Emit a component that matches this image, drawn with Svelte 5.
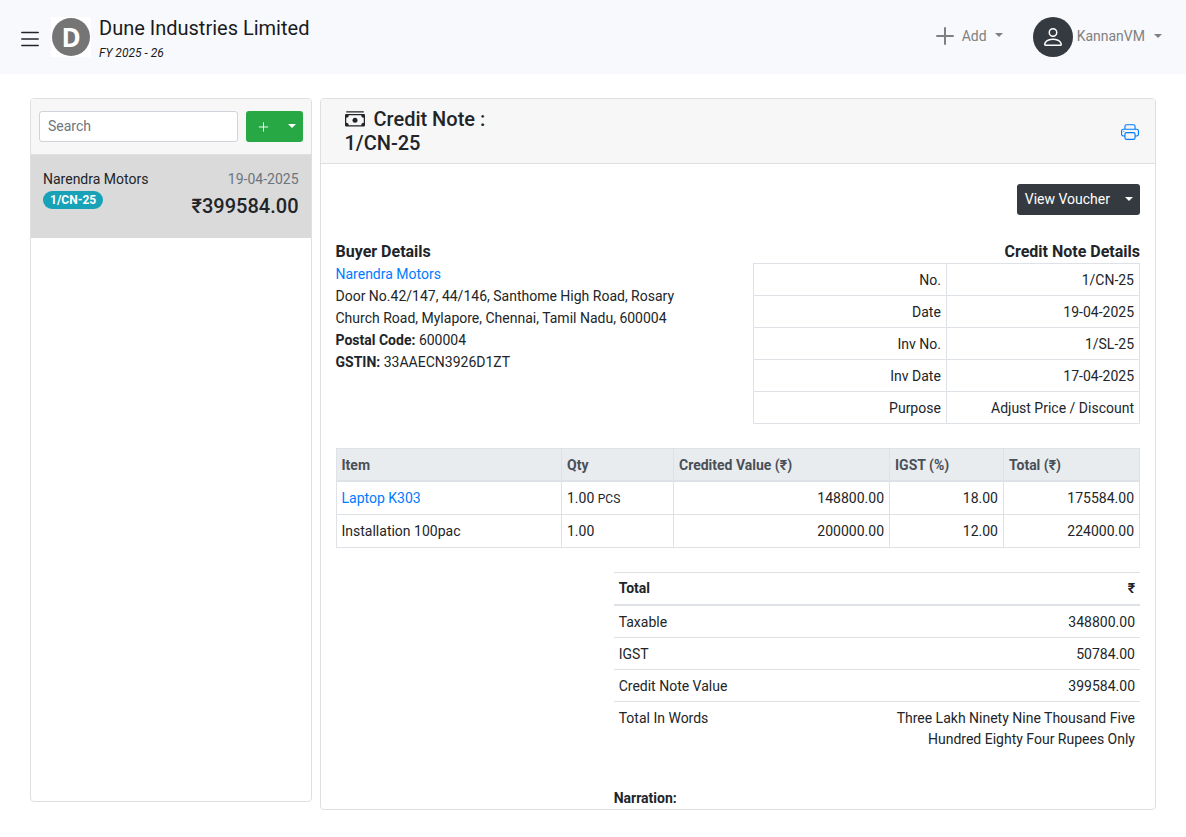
<script>
  const details = [
    ['No.', '1/CN-25'],
    ['Date', '19-04-2025'],
    ['Inv No.', '1/SL-25'],
    ['Inv Date', '17-04-2025'],
    ['Purpose', 'Adjust Price / Discount']
  ];
  const items = [
    { name: 'Laptop K303', link: true, qty: '1.00', unit: 'PCS', value: '148800.00', tax: '18.00', total: '175584.00' },
    { name: 'Installation 100pac', link: false, qty: '1.00', unit: '', value: '200000.00', tax: '12.00', total: '224000.00' }
  ];
  const totals = [
    ['Taxable', '348800.00'],
    ['IGST', '50784.00'],
    ['Credit Note Value', '399584.00'],
    ['Total In Words', 'Three Lakh Ninety Nine Thousand Five Hundred Eighty Four Rupees Only']
  ];
  let search = $state('');
</script>

<header class="topbar">
  <button class="plain menu" aria-label="Menu">
    <svg width="26" height="26" viewBox="0 0 16 16" fill="none" stroke="#212529" stroke-linecap="round"><path d="M3 4h10M3 8h10M3 12h10" /></svg>
  </button>
  <a class="brand" href="#home">
    <span class="logo"><span>D</span></span>
    <span class="company">
      <span class="name">Dune Industries Limited</span>
      <span class="year">FY 2025 - 26</span>
    </span>
  </a>
  <nav>
    <button class="plain add">
      <svg width="20" height="20" viewBox="0 0 20 20" fill="none" stroke="currentColor" stroke-width="2" stroke-linecap="round"><path d="M10 2v16M2 10h16" /></svg>
      <span>Add</span><i class="caret"></i>
    </button>
    <button class="plain user">
      <span class="avatar">
        <svg width="24" height="24" viewBox="0 0 16 16" fill="currentColor"><path d="M8 8a3 3 0 1 0 0-6 3 3 0 0 0 0 6m2-3a2 2 0 1 1-4 0 2 2 0 0 1 4 0m4 8c0 1-1 1-1 1H3s-1 0-1-1 1-4 6-4 6 3 6 4m-1-.004c-.001-.246-.154-.986-.832-1.664C11.516 10.68 10.289 10 8 10s-3.516.68-4.168 1.332c-.678.678-.83 1.418-.832 1.664z" /></svg>
      </span>
      <span class="label">KannanVM</span><i class="caret"></i>
    </button>
  </nav>
</header>

<main>
  <aside class="card list">
    <div class="card-head tools">
      <input type="text" placeholder="Search" aria-label="Search" bind:value={search} />
      <div class="group green">
        <button aria-label="New credit note">
          <svg width="15" height="15" viewBox="0 0 16 16" fill="none" stroke="currentColor" stroke-linecap="round"><path d="M8 4v9M3.5 8.5h9" /></svg>
        </button>
        <button aria-label="More options"><i class="caret"></i></button>
      </div>
    </div>
    <a class="entry" href="#note">
      <span class="who"><span>Narendra Motors</span><span class="badge">1/CN-25</span></span>
      <span class="sum"><span class="muted">19-04-2025</span><span class="amount">₹399584.00</span></span>
    </a>
  </aside>

  <section class="card note">
    <div class="card-head title">
      <h1>
        <svg width="20" height="20" viewBox="0 0 16 16" fill="currentColor"><path d="M1 1.7h14v1H1zM0 5a1 1 0 0 1 1-1h14a1 1 0 0 1 1 1v8a1 1 0 0 1-1 1H1a1 1 0 0 1-1-1zm3 0a2 2 0 0 1-2 2v4a2 2 0 0 1 2 2h10a2 2 0 0 1 2-2V7a2 2 0 0 1-2-2z" /><circle cx="8" cy="9" r="2" /></svg>
        Credit Note :<span>1/CN-25</span>
      </h1>
      <button class="plain print" aria-label="Print">
        <svg width="18" height="18" viewBox="0 0 16 16" fill="currentColor"><path d="M2.5 8a.5.5 0 1 0 0-1 .5.5 0 0 0 0 1" /><path d="M5 1a2 2 0 0 0-2 2v2H2a2 2 0 0 0-2 2v3a2 2 0 0 0 2 2h1v1a2 2 0 0 0 2 2h6a2 2 0 0 0 2-2v-1h1a2 2 0 0 0 2-2V7a2 2 0 0 0-2-2h-1V3a2 2 0 0 0-2-2zM4 3a1 1 0 0 1 1-1h6a1 1 0 0 1 1 1v2H4zm1 5a2 2 0 0 0-2 2v1H2a1 1 0 0 1-1-1V7a1 1 0 0 1 1-1h12a1 1 0 0 1 1 1v3a1 1 0 0 1-1 1h-1v-1a2 2 0 0 0-2-2zm7 2v3a1 1 0 0 1-1 1H5a1 1 0 0 1-1-1v-3a1 1 0 0 1 1-1h6a1 1 0 0 1 1 1" /></svg>
      </button>
    </div>
    <div class="body">
      <div class="actions">
        <div class="group dark">
          <button>View Voucher</button>
          <button aria-label="More voucher options"><i class="caret"></i></button>
        </div>
      </div>

      <div class="parties">
        <div class="buyer">
          <h2>Buyer Details</h2>
          <a href="#buyer">Narendra Motors</a>
          <p>Door No.42/147, 44/146, Santhome High Road, Rosary Church Road, Mylapore, Chennai, Tamil Nadu, 600004</p>
          <p><b>Postal Code:</b> 600004</p>
          <p><b>GSTIN:</b> 33AAECN3926D1ZT</p>
        </div>
        <div class="meta">
          <h2>Credit Note Details</h2>
          <table class="grid fixed">
            <tbody>
              {#each details as [label, value]}
                <tr><td class="num">{label}</td><td class="num">{value}</td></tr>
              {/each}
            </tbody>
          </table>
        </div>
      </div>

      <table class="grid fixed items">
        <colgroup><col /><col class="c2" /><col class="c3" /><col class="c4" /><col class="c5" /></colgroup>
        <thead>
          <tr><th>Item</th><th>Qty</th><th>Credited Value (₹)</th><th>IGST (%)</th><th>Total (₹)</th></tr>
        </thead>
        <tbody>
          {#each items as item}
            <tr>
              <td>{#if item.link}<a href="#item">{item.name}</a>{:else}{item.name}{/if}</td>
              <td>{item.qty} <small>{item.unit}</small></td>
              <td class="num">{item.value}</td>
              <td class="num">{item.tax}</td>
              <td class="num">{item.total}</td>
            </tr>
          {/each}
        </tbody>
      </table>

      <div class="summary">
        <table class="fixed">
          <thead><tr><th>Total</th><th class="num">₹</th></tr></thead>
          <tbody>
            {#each totals as [label, value]}
              <tr><td>{label}</td><td class="num">{value}</td></tr>
            {/each}
          </tbody>
        </table>
        <p><b>Narration:</b></p>
      </div>
    </div>
  </section>
</main>

<style>
  :global(body) {
    margin: 0;
    background: #fff;
    color: #212529;
    font: 14px/22px Roboto, "Liberation Sans", sans-serif;
  }
  * { box-sizing: border-box; }
  h1, h2, p { margin: 0; }
  a { color: #007bff; text-decoration: none; }
  button { font: inherit; cursor: pointer; }
  svg { display: block; }
  small { font-size: 12px; }

  .plain {
    display: flex;
    align-items: center;
    padding: 0;
    border: 0;
    background: none;
    color: #808080;
  }
  .caret {
    margin-bottom: 2px;
    border: 4px solid transparent;
    border-top-color: currentColor;
    border-bottom: 0;
  }

  .topbar {
    display: flex;
    align-items: center;
    height: 74px;
    padding: 0 24px 0 17px;
    background: #f8f9fc;
  }
  .menu { padding-top: 3px; }
  .brand {
    display: flex;
    align-items: center;
    gap: 8px;
    margin-left: 8px;
    color: #191b1d;
  }
  .logo { padding: 1px; background: #fff; }
  .logo span {
    display: grid;
    place-items: center;
    width: 38px;
    height: 38px;
    border-radius: 50%;
    background: #757575;
    color: #fff;
    font: bold 26px/38px "Open Sans", sans-serif;
  }
  .company { display: flex; flex-direction: column; padding-top: 2px; }
  .name { font-size: 20px; line-height: 30px; }
  .year { font-size: 12px; line-height: 20px; font-style: italic; }
  nav { display: flex; align-items: center; gap: 30px; margin-left: auto; }
  .add { padding-bottom: 2px; }
  .add span { margin: 0 8px 0 7px; }
  .label { padding-bottom: 2px; }
  .avatar {
    display: grid;
    place-items: center;
    width: 40px;
    height: 40px;
    margin-right: 4px;
    border-radius: 50%;
    background: #343a40;
    color: #fff;
  }
  .user .caret { margin-left: 9px; }

  main {
    display: grid;
    grid-template-columns: 25% 1fr;
    align-items: start;
    gap: 8px;
    padding: 24px 30px 0;
  }
  .card {
    overflow: hidden;
    border: 1px solid #dfdfdf;
    border-radius: 4px;
    background: #fff;
  }
  .list { height: calc(100vh - 133px); }
  .note { height: calc(100vh - 125px); }
  .card-head {
    display: flex;
    border-bottom: 1px solid #dfdfdf;
    background: #f7f7f7;
  }
  .tools { gap: 8px; padding: 12px 8px; }
  input {
    flex: 1;
    min-width: 0;
    height: 31px;
    padding: 3px 8px 5px;
    border: 1px solid #ced4da;
    border-radius: 3px;
    background: #fff;
    color: #495057;
    font: inherit;
  }
  input::placeholder { color: #6c757d; opacity: 1; }
  .group {
    display: flex;
    height: 31px;
    overflow: hidden;
    border-radius: 3px;
    color: #fff;
  }
  .group button {
    display: flex;
    align-items: center;
    padding: 0 8px 2px;
    border: 0;
    background: none;
    color: inherit;
  }
  .green { background: #28a745; }
  .green button:first-child { padding: 0 10px; }
  .group button:last-child { padding: 0 7px; }
  .dark { background: #343a40; }

  .entry {
    display: flex;
    justify-content: space-between;
    height: 83px;
    padding: 13px 12px;
    background: #dadada;
    color: inherit;
  }
  .who, .sum { display: flex; flex-direction: column; }
  .who { align-items: flex-start; gap: 1px; }
  .sum { align-items: flex-end; }
  .muted { color: #6c757d; }
  .badge {
    padding: 1px 7px 0;
    border-radius: 9px;
    background: #17a2b8;
    color: #fff;
    font-size: 12px;
    font-weight: 700;
    line-height: 17px;
  }
  .amount { font-size: 20px; font-weight: 500; line-height: 32px; }

  .title {
    align-items: center;
    justify-content: space-between;
    padding: 8px 16px 8px 24px;
  }
  h1 { font-size: 20px; font-weight: 500; line-height: 24px; }
  h1 svg { display: inline-block; margin-right: 4px; vertical-align: -3px; }
  h1 span { display: block; }
  .print { padding-top: 2px; color: #007bff; }

  .body { padding: 20px 15px; }
  .actions { display: flex; justify-content: flex-end; margin-bottom: 24px; }
  .parties { display: grid; grid-template-columns: 1fr 1fr; gap: 30px; margin-bottom: 24px; }
  h2 { padding-top: 2px; font-size: 16px; font-weight: 700; line-height: 22px; }
  .meta h2 { text-align: right; }
  .buyer { padding-right: 16px; }

  table { width: 100%; border-collapse: collapse; }
  .fixed { table-layout: fixed; }
  th, td {
    padding: 6px 5px 4px;
    border-top: 1px solid #dee2e6;
    line-height: 21px;
    text-align: left;
    vertical-align: top;
  }
  th { font-weight: 700; }
  thead th { border-bottom: 2px solid #dee2e6; }
  .grid th, .grid td { border-right: 1px solid #dee2e6; border-left: 1px solid #dee2e6; }
  .grid { border-bottom: 1px solid #dee2e6; }
  th.num, td.num { text-align: right; }
  .items { margin-bottom: 24px; }
  .items th { background: #e9ecef; color: #495057; }
  .c2 { width: 112px; }
  .c3 { width: 216px; }
  .c4 { width: 114px; }
  .c5 { width: 136px; }
  .summary { width: calc(200% / 3 - 10px); margin-left: auto; }
  .summary p { margin-top: 33px; }
  .summary th { padding: 5px; }
</style>
